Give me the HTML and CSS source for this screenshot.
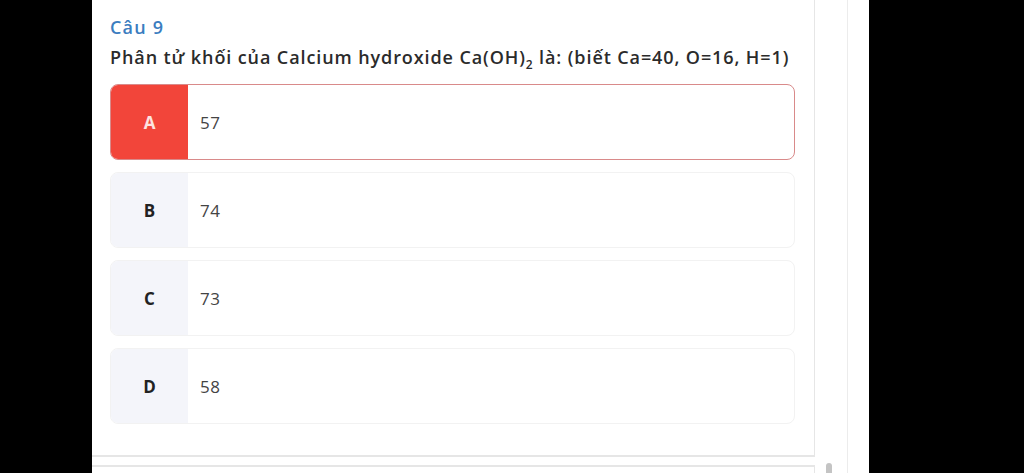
FILE: index.html
```html
<!DOCTYPE html>
<html lang="vi">
<head>
    <meta charset="UTF-8">
    <meta name="viewport" content="width=device-width, initial-scale=1.0">
    <title>Câu 9</title>
    <link rel="stylesheet" href="styles.css">
</head>
<body>

    <div class="screen">
        <div class="content">
            <div class="question-card">
                <div class="question-number">Câu 9</div>
                <div class="question-text">Phân tử khối của Calcium hydroxide Ca(OH)<sub>2</sub> là: (biết Ca=40, O=16, H=1)</div>
                <div class="options">
                    <div class="option wrong">
                        <div class="option-letter">A</div>
                        <div class="option-value">57</div>
                    </div>
                    <div class="option">
                        <div class="option-letter">B</div>
                        <div class="option-value">74</div>
                    </div>
                    <div class="option">
                        <div class="option-letter">C</div>
                        <div class="option-value">73</div>
                    </div>
                    <div class="option">
                        <div class="option-letter">D</div>
                        <div class="option-value">58</div>
                    </div>
                </div>
            </div>
            <div class="next-card"></div>
        </div>
        <div class="side">
            <div class="scroll-thumb"></div>
        </div>
    </div>

</body>
</html>
```

FILE: styles.css
```css
body {
    margin: 0;
    background-color: #000;
    font-family: "Open Sans", Arial, sans-serif;
    height: 473px;
    overflow: hidden;
}
.screen {
    display: flex;
    margin-left: 92px;
    width: 777px;
    height: 473px;
    background-color: #fff;
}
.content {
    width: 723px;
    display: flex;
    flex-direction: column;
    gap: 8px;
}
.question-card {
    border-right: 1px solid #e6e6e6;
    border-bottom: 2px solid #e6e6e6;
    padding: 14px 19px 31px 18px;
    background-color: #fff;
}
.question-number {
    color: #3b7dbf;
    font-size: 18px;
    font-weight: 600;
    line-height: 26px;
    letter-spacing: 1.2px;
}
.question-text {
    color: #2b2b2b;
    font-size: 18px;
    font-weight: 600;
    line-height: 26px;
    margin-top: 4px;
    letter-spacing: 0.9px;
    white-space: nowrap;
}
.question-text sub {
    font-size: 12px;
    line-height: 0;
}
.options {
    display: flex;
    flex-direction: column;
    gap: 12px;
    margin-top: 14px;
}
.option {
    display: flex;
    height: 74px;
    border: 1px solid #f2f2f2;
    border-radius: 8px;
    overflow: hidden;
}
.option-letter {
    width: 77px;
    display: flex;
    justify-content: center;
    align-items: center;
    background-color: #f4f5fa;
    color: #222;
    font-size: 17px;
    font-weight: 700;
}
.option-value {
    display: flex;
    align-items: center;
    padding-left: 12px;
    color: #444;
    font-size: 17px;
    letter-spacing: 0.5px;
}
.option.wrong {
    border-color: #d98a8a;
}
.option.wrong .option-letter {
    background-color: #f2453a;
    color: #fde3e0;
}
.next-card {
    border-top: 2px solid #e6e6e6;
    border-right: 1px solid #e6e6e6;
    flex: 1;
}
.side {
    width: 32px;
    border-right: 1px solid #ececec;
    position: relative;
}
.scroll-thumb {
    position: absolute;
    left: 11px;
    top: 463px;
    width: 6px;
    height: 20px;
    border-radius: 3px;
    background-color: #c4c4c4;
}
```
